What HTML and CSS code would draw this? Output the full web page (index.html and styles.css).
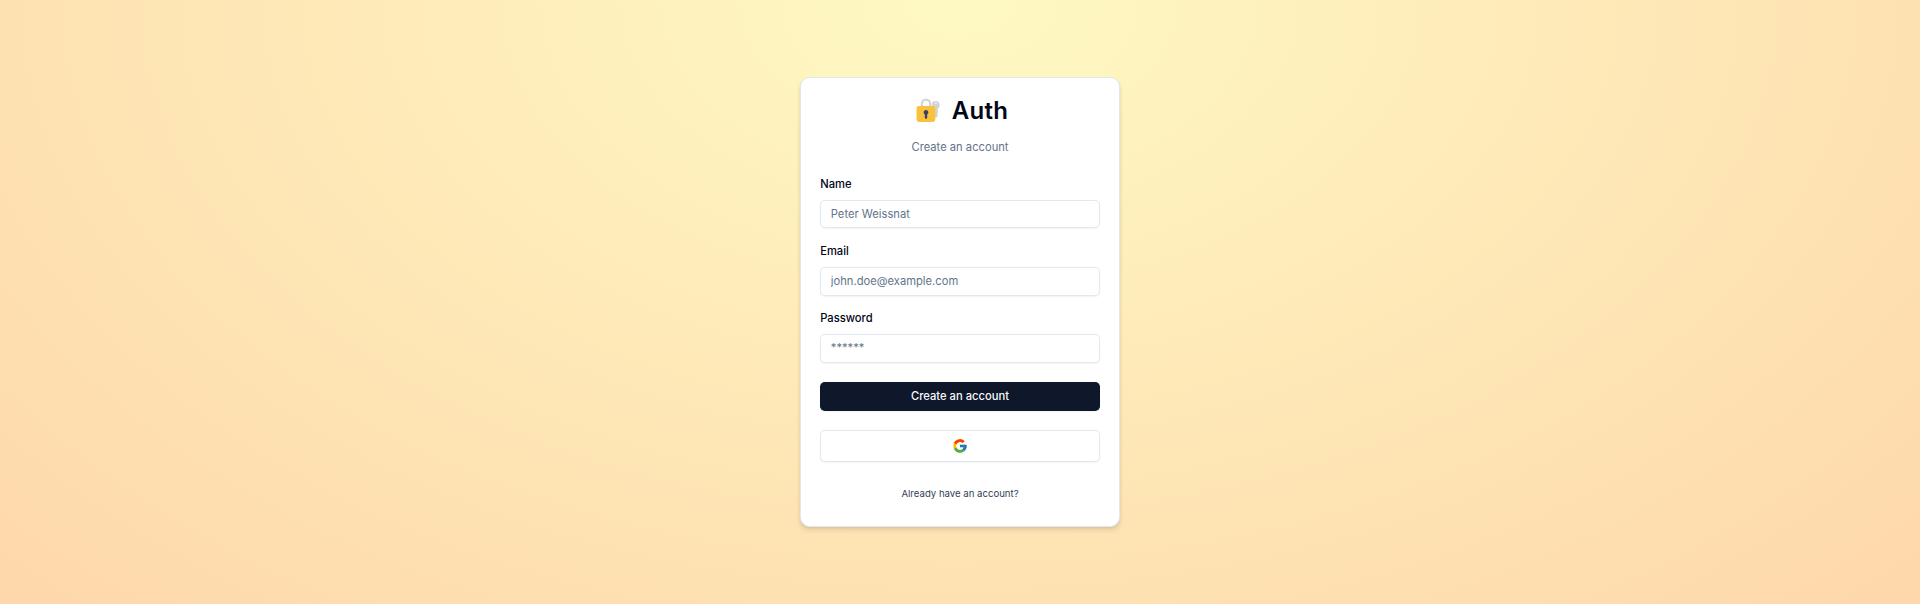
FILE: index.html
```html
<!DOCTYPE html>
<html lang="en">
<head>
<meta charset="utf-8">
<title>Auth</title>
<link rel="stylesheet" href="styles.css">
</head>
<body>
<main class="page">
  <section class="card">
    <header class="card-header">
      <h1 class="title">
        <svg class="lock" viewBox="0 0 32 32" aria-hidden="true">
          <circle cx="24.6" cy="8.6" r="5" fill="#d3d3d3"/>
          <path d="M23.6 12h4v7l-1.2 1.4 1.2 1.6-2 2.4h-2z" fill="#d3d3d3"/>
          <circle cx="24.8" cy="6.6" r="1.3" fill="#f0f0f0"/>
          <path d="M7.3 12V7.2a5.2 5.2 0 0 1 10.4 0V12" fill="none" stroke="#d3d3d3" stroke-width="2.6"/>
          <rect x="0.7" y="10" width="23.4" height="20" rx="3" fill="#f9c23c"/>
          <path d="M12.5 15a3 3 0 0 0-1.5 5.6v3.9a1.5 1.5 0 0 0 3 0v-3.9a3 3 0 0 0-1.5-5.6z" fill="#433b6b"/>
        </svg>
        <span>Auth</span>
      </h1>
      <p class="subtitle">Create an account</p>
    </header>
    <form class="form">
      <div class="fields">
        <div class="field"><label class="label" for="name">Name</label><input class="input" id="name" placeholder="Peter Weissnat"></div>
        <div class="field"><label class="label" for="email">Email</label><input class="input" id="email" type="email" placeholder="john.doe@example.com"></div>
        <div class="field"><label class="label" for="password">Password</label><input class="input" id="password" type="password" placeholder="******"></div>
      </div>
      <button class="button primary" type="button">Create an account</button>
    </form>
    <div class="social">
      <button class="button outline" type="button" aria-label="Google">
        <svg class="google" viewBox="0 0 48 48">
          <path fill="#FFC107" d="M43.611 20.083H42V20H24v8h11.303c-1.649 4.657-6.08 8-11.303 8-6.627 0-12-5.373-12-12s5.373-12 12-12c3.059 0 5.842 1.154 7.961 3.039l5.657-5.657C34.046 6.053 29.268 4 24 4 12.955 4 4 12.955 4 24s8.955 20 20 20 20-8.955 20-20c0-1.341-.138-2.65-.389-3.917z"/>
          <path fill="#FF3D00" d="M6.306 14.691l6.571 4.819C14.655 15.108 18.961 12 24 12c3.059 0 5.842 1.154 7.961 3.039l5.657-5.657C34.046 6.053 29.268 4 24 4 16.318 4 9.656 8.337 6.306 14.691z"/>
          <path fill="#4CAF50" d="M24 44c5.166 0 9.86-1.977 13.409-5.192l-6.19-5.238C29.211 35.091 26.715 36 24 36c-5.202 0-9.619-3.317-11.283-7.946l-6.522 5.025C9.505 39.556 16.227 44 24 44z"/>
          <path fill="#1976D2" d="M43.611 20.083H42V20H24v8h11.303a12.04 12.04 0 0 1-4.087 5.571l.003-.002 6.19 5.238C36.971 39.205 44 34 44 24c0-1.341-.138-2.65-.389-3.917z"/>
        </svg>
      </button>
    </div>
    <footer class="footer"><a class="link">Already have an account?</a></footer>
  </section>
</main>
</body>
</html>
```
FILE: styles.css
```css
* { box-sizing: border-box; margin: 0; }
body { font-family: Inter, "Liberation Sans", sans-serif; color: #020617; }
.page {
  min-height: 100vh;
  display: flex;
  align-items: center;
  justify-content: center;
  background: radial-gradient(ellipse at top, #fef9c3, #fed7aa);
}
.card {
  zoom: 0.8;
  width: 400px;
  background: #fff;
  border: 1px solid #e2e8f0;
  border-radius: 12px;
  box-shadow: 0 4px 6px -1px rgb(0 0 0 / 0.1), 0 2px 4px -2px rgb(0 0 0 / 0.1);
  font-size: 16px;
  line-height: 24px;
}
.card-header {
  display: flex;
  flex-direction: column;
  align-items: center;
  gap: 16px;
  padding: 24px;
}
.title {
  display: flex;
  align-items: center;
  gap: 12px;
  padding-left: 6px;
  font-size: 30px;
  line-height: 36px;
  font-weight: 600;
  letter-spacing: 0.4px;
}
.lock { width: 32px; height: 32px; margin-bottom: 3px; }
.subtitle { font-size: 14px; line-height: 20px; color: #64748b; }
.form { display: flex; flex-direction: column; gap: 24px; padding: 0 24px 24px; }
.fields { display: flex; flex-direction: column; gap: 16px; }
.field { display: flex; flex-direction: column; gap: 8px; }
.label { height: 24px; padding-top: 1px; font-size: 14px; line-height: 24px; font-weight: 500; }
.input {
  width: 100%;
  height: 36px;
  padding: 4px 12px;
  border: 1px solid #e2e8f0;
  border-radius: 6px;
  background: transparent;
  font: 14px/20px Inter, "Liberation Sans", sans-serif;
  box-shadow: 0 1px 2px rgb(0 0 0 / 0.05);
}
.input::placeholder { color: #64748b; opacity: 1; }
.button {
  display: flex;
  align-items: center;
  justify-content: center;
  width: 100%;
  height: 36px;
  border: 0;
  border-radius: 6px;
  font: 500 14px/20px Inter, "Liberation Sans", sans-serif;
  box-shadow: 0 1px 2px rgb(0 0 0 / 0.05);
}
.primary { background: #0f172a; color: #f8fafc; }
.outline { height: 40px; background: #fff; border: 1px solid #e2e8f0; }
.google { width: 20px; height: 20px; }
.social { padding: 0 24px 24px; }
.footer { display: flex; justify-content: center; padding: 0 24px 24px; }
.link { font-size: 12px; line-height: 32px; color: #334155; }
```
